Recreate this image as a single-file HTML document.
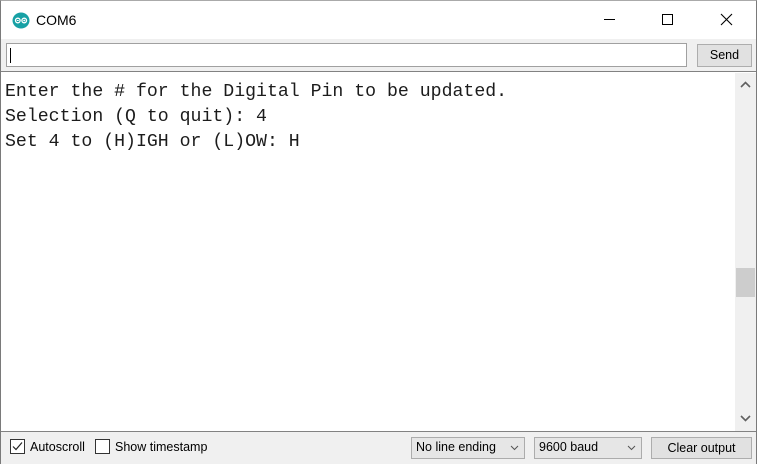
<!DOCTYPE html>
<html><head><meta charset="utf-8"><style>
*{margin:0;padding:0;box-sizing:border-box}
body{width:757px;height:464px;overflow:hidden;background:#fff;font-family:"Liberation Sans",sans-serif;font-size:13px;color:#000;position:relative}
.win{position:absolute;left:0;top:0;width:757px;height:464px;border:1px solid #7a7a7a;border-top:1px solid #aaa}
.title{position:absolute;left:0;top:0;width:755px;height:38px;background:#fff}
.ttext{position:absolute;left:35px;top:11px;font-size:14px;color:#000}
.tool{position:absolute;left:0;top:38px;width:755px;height:33px;background:#f0f0f0;border-bottom:1px solid #828282}
.inp{position:absolute;left:5px;top:4px;width:681px;height:24px;background:#fff;border:1px solid #a0a0a0}
.caret{position:absolute;left:3px;top:4px;width:1px;height:15px;background:#000}
.btn{position:absolute;background:#e1e1e1;border:1px solid #adadad;text-align:center;font-size:12.5px}
.out{position:absolute;left:0;top:72px;width:734px;height:358px;background:#fff;font-family:"Liberation Mono",monospace;font-size:18.2px;color:#1c1c1c;padding:7px 0 0 4px;line-height:25px;white-space:pre}
.sb{position:absolute;left:734px;top:72px;width:21px;height:358px;background:#f0f0f0}
.thumb{position:absolute;left:1px;top:195px;width:19px;height:29px;background:#cdcdcd}
.bot{position:absolute;left:0;top:430px;width:755px;height:33px;background:#f0f0f0;border-top:1px solid #828282}
.cb{position:absolute;top:7px;width:15px;height:15px;border:1px solid #333;background:#fff}
.lbl{position:absolute;top:8px;font-size:12.5px}
.sel{position:absolute;top:5px;height:22px;background:#e6e6e6;border:1px solid #acacac;font-size:12.5px;padding:2px 0 0 4px}
.arr{position:absolute;right:5px;top:3px}
</style></head><body>
<div class="win">
<div class="title">
<svg style="position:absolute;left:11px;top:11px" width="18" height="17" viewBox="0 0 18 17"><ellipse cx="9" cy="8.5" rx="8.5" ry="8" fill="#17a1a5"/><circle cx="5.8" cy="8.5" r="2.3" fill="none" stroke="#fff" stroke-width="1.3"/><circle cx="12.2" cy="8.5" r="2.3" fill="none" stroke="#fff" stroke-width="1.3"/><path d="M4.9 8.5h1.8M11.3 8.5h1.8M12.2 7.6v1.8" stroke="#fff" stroke-width="0.9"/></svg>
<div class="ttext">COM6</div>
<div style="position:absolute;left:603px;top:18px;width:11px;height:1px;background:#000"></div>
<div style="position:absolute;left:661px;top:13px;width:11px;height:11px;border:1px solid #000"></div>
<svg style="position:absolute;left:719px;top:12px" width="13" height="13"><path d="M1 1L12 12M12 1L1 12" stroke="#000" stroke-width="1.1"/></svg>
</div>
<div class="tool">
<div class="inp"><div class="caret"></div></div>
<div class="btn" style="left:696px;top:5px;width:55px;height:23px;line-height:21px">Send</div>
</div>
<div class="out">Enter the # for the Digital Pin to be updated.
Selection (Q to quit): 4
Set 4 to (H)IGH or (L)OW: H</div>
<div class="sb">
<svg style="position:absolute;left:5px;top:8px" width="11" height="7"><path d="M1 6L5.5 1.5L10 6" stroke="#606060" stroke-width="1.6" fill="none"/></svg>
<div class="thumb"></div>
<svg style="position:absolute;left:5px;top:342px" width="11" height="7"><path d="M1 1L5.5 5.5L10 1" stroke="#606060" stroke-width="1.6" fill="none"/></svg>
</div>
<div class="bot">
<div class="cb" style="left:9px"><svg width="13" height="13" style="position:absolute;left:0;top:0"><path d="M2 6.5L5 9.5L11 2.5" stroke="#222" stroke-width="1.2" fill="none"/></svg></div>
<div class="lbl" style="left:29px">Autoscroll</div>
<div class="cb" style="left:94px"></div>
<div class="lbl" style="left:114px">Show timestamp</div>
<div class="sel" style="left:410px;width:114px">No line ending<svg class="arr" width="9" height="14"><path d="M1 5L4.5 8.5L8 5" stroke="#555" fill="none"/></svg></div>
<div class="sel" style="left:533px;width:108px">9600 baud<svg class="arr" width="9" height="14"><path d="M1 5L4.5 8.5L8 5" stroke="#555" fill="none"/></svg></div>
<div class="btn" style="left:650px;top:5px;width:101px;height:22px;line-height:20px">Clear output</div>
</div>
</div>
</body></html>
